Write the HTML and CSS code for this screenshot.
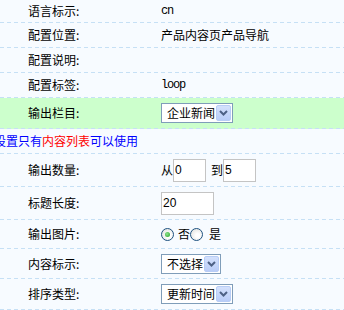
FILE: index.html
```html
<!DOCTYPE html>
<html lang="zh-CN">
<head>
    <meta charset="UTF-8">
    <title>配置</title>
    <link rel="stylesheet" href="styles.css">
</head>
<body>
    <div id="configForm">
        <div class="row first">
            <div class="label">语言标示:</div>
            <div class="value"><span class="code">cn</span></div>
        </div>
        <div class="row">
            <div class="label">配置位置:</div>
            <div class="value">产品内容页产品导航</div>
        </div>
        <div class="row">
            <div class="label">配置说明:</div>
            <div class="value"></div>
        </div>
        <div class="row">
            <div class="label">配置标签:</div>
            <div class="value"><span class="code">loop</span></div>
        </div>
        <div class="row highlight">
            <div class="label">输出栏目:</div>
            <div class="value">
                <div class="select"><span class="select-text">企业新闻</span><span class="select-btn"><svg width="9" height="6" viewBox="0 0 9 6"><path d="M1 1 L4.5 4.5 L8 1" fill="none" stroke="#4d6185" stroke-width="2"/></svg></span></div>
            </div>
        </div>
        <div class="row notice">
            <span class="blue">设置只有</span><span class="red">内容列表</span><span class="blue">可以使用</span>
        </div>
        <div class="row tall">
            <div class="label">输出数量:</div>
            <div class="value">从<input type="text" class="num" value="0"><span class="to">到</span><input type="text" class="num" value="5"></div>
        </div>
        <div class="row tall">
            <div class="label">标题长度:</div>
            <div class="value"><input type="text" class="len" value="20"></div>
        </div>
        <div class="row r28">
            <div class="label">输出图片:</div>
            <div class="value">
                <span class="radio checked"></span><span class="opt">否</span><span class="radio"></span><span class="opt last">是</span>
            </div>
        </div>
        <div class="row r29">
            <div class="label">内容标示:</div>
            <div class="value">
                <div class="select"><span class="select-text">不选择</span><span class="select-btn"><svg width="9" height="6" viewBox="0 0 9 6"><path d="M1 1 L4.5 4.5 L8 1" fill="none" stroke="#4d6185" stroke-width="2"/></svg></span></div>
            </div>
        </div>
        <div class="row r30">
            <div class="label">排序类型:</div>
            <div class="value">
                <div class="select"><span class="select-text">更新时间</span><span class="select-btn"><svg width="9" height="6" viewBox="0 0 9 6"><path d="M1 1 L4.5 4.5 L8 1" fill="none" stroke="#4d6185" stroke-width="2"/></svg></span></div>
            </div>
        </div>
    </div>
</body>
</html>
```

FILE: styles.css
```css
body {
    margin: 0;
    background-color: #f7fbff;
    font-family: "Noto Sans CJK SC", "DejaVu Sans", sans-serif;
    font-size: 12px;
    color: #000;
    overflow: hidden;
}
#configForm {
    width: 344px;
}
.row {
    display: flex;
    align-items: center;
    box-sizing: border-box;
    height: 25px;
    padding-bottom: 1px;
    background-image: repeating-linear-gradient(90deg, #c6e0f5 0 4px, transparent 4px 7px);
    background-size: 100% 1px;
    background-position: left bottom;
    background-repeat: no-repeat;
    white-space: nowrap;
}
.row.first {
    height: 23px;
}
.row.highlight {
    height: 31px;
    background-color: #ccffcc;
}
.row.tall {
    height: 33px;
}
.row.r28 {
    height: 29px;
}
.row.r29 {
    height: 30px;
}
.row.r30 {
    height: 31px;
}
.label {
    width: 161px;
    flex: none;
    box-sizing: border-box;
    padding-left: 28px;
    line-height: 14px;
}
.value {
    display: flex;
    align-items: center;
    line-height: 14px;
}
.code {
    font-family: "Liberation Mono", monospace;
    font-size: 12px;
    letter-spacing: -1.2px;
}
.notice {
    text-indent: -6px;
    display: block;
    line-height: 24px;
}
.blue {
    color: #0000ff;
}
.red {
    color: #ff0000;
}
.select {
    display: flex;
    align-items: center;
    box-sizing: border-box;
    height: 20px;
    border: 1px solid #7f9db9;
    background: #fff;
    padding: 1px;
}
.select-text {
    padding: 0 1px 0 4px;
}
.select-btn {
    width: 15px;
    height: 16px;
    box-sizing: border-box;
    border: 1px solid #b8cdf6;
    border-radius: 2px;
    background: linear-gradient(#d4e1fc, #b9cdf8);
    display: flex;
    align-items: center;
    justify-content: center;
}
input {
    box-sizing: border-box;
    height: 23px;
    border: 1px solid #c4c4c4;
    background: #fff;
    font-family: "Liberation Sans", sans-serif;
    font-size: 12px;
    padding: 0 1px;
    margin: 0;
    outline: none;
}
input.num {
    width: 33px;
}
input.len {
    width: 53px;
}
.to {
    margin-left: 5px;
}
.radio {
    width: 13px;
    height: 13px;
    box-sizing: border-box;
    border: 1px solid #1c5180;
    border-radius: 50%;
    background: radial-gradient(circle at 60% 60%, #ffffff 20%, #dcdcd7 100%);
    position: relative;
}
.radio.checked::after {
    content: "";
    position: absolute;
    left: 3px;
    top: 3px;
    width: 5px;
    height: 5px;
    border-radius: 50%;
    background: radial-gradient(circle at 40% 40%, #8fe38f, #21a121);
}
.opt {
    margin-left: 4px;
}
.opt.last {
    margin-left: 6px;
}
```
